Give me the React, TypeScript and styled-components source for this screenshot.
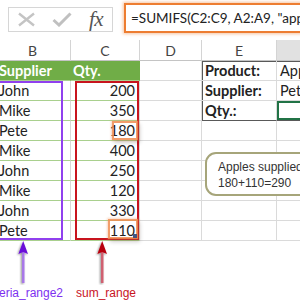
import React from "react";
import styled, { createGlobalStyle } from "styled-components";

const GlobalStyle = createGlobalStyle`
  html, body { margin: 0; padding: 0; background: #fff; }
  body { width: 300px; height: 300px; overflow: hidden; font-family: Lato, "Open Sans", sans-serif; }
  * { box-sizing: border-box; }
`;

const Page = styled.div`
  position: relative;
  width: 300px;
  height: 300px;
  overflow: hidden;
  display: flex;
  flex-direction: column;
  background: #fff;
`;

const Toolbar = styled.div`
  height: 40px;
  flex-shrink: 0;
  display: flex;
  align-items: flex-start;
`;

const ButtonBox = styled.div`
  margin: 7px 0 0 8px;
  width: 105px;
  height: 25px;
  flex-shrink: 0;
  border: 1px solid #d6d6d6;
  display: flex;
  align-items: center;
  padding-left: 8px;
  gap: 16px;
`;

const FxLabel = styled.span`
  font-family: "Liberation Serif", serif;
  font-style: italic;
  font-size: 21px;
  color: #555;
  line-height: 1;
  margin-left: 1px;
  letter-spacing: -0.5px;
`;

const FormulaBar = styled.div`
  margin: 3px 0 0 11px;
  height: 30px;
  min-width: 200px;
  flex-shrink: 0;
  border: 2px solid #ed7d31;
  box-shadow: 0 0 3px 1px rgba(237, 125, 49, 0.45);
  padding-left: 5px;
  font-size: 13.5px;
  line-height: 26px;
  color: #222;
  white-space: nowrap;
  overflow: hidden;
`;

const Sheet = styled.div`
  display: grid;
  grid-template-columns: 76px 69px 62px 75px 60px;
  grid-template-rows: 21px repeat(9, 20px);
  margin-left: -5px;
  flex-shrink: 0;
  font-size: 14.5px;
  color: #222;
`;

const ColHead = styled.div<{ $active?: boolean }>`
  display: flex;
  align-items: center;
  justify-content: center;
  color: #444;
  font-size: 14px;
  background: ${(p) => (p.$active ? "#e1e1e1" : "#fff")};
  border-right: 1px solid #d4d4d4;
  border-bottom: 1px solid #c4c4c4;
`;

const TableCell = styled.div<{ $head?: boolean; $num?: boolean; $lead?: boolean }>`
  display: flex;
  align-items: center;
  justify-content: ${(p) => (p.$num ? "flex-end" : "flex-start")};
  padding: ${(p) => (p.$num ? "0 4px 0 0" : p.$lead ? "0 0 0 4px" : "0 0 0 2px")};
  background: ${(p) => (p.$head ? "#70ad47" : "#fff")};
  color: ${(p) => (p.$head ? "#fff" : "#222")};
  font-weight: ${(p) => (p.$head ? 700 : 400)};
  border-bottom: 1px solid #a9d08e;
  border-right: 1px solid ${(p) => (p.$head ? "#70ad47" : "#d9d9d9")};
  white-space: nowrap;
`;

const SheetCell = styled.div<{
  $bold?: boolean;
  $lead?: boolean;
  $top?: boolean;
  $bottom?: boolean;
  $selected?: boolean;
}>`
  display: flex;
  align-items: center;
  padding-left: 3px;
  font-weight: ${(p) => (p.$bold ? 700 : 400)};
  white-space: nowrap;
  overflow: hidden;
  border-right: 1px solid #dadada;
  border-bottom: 1px solid ${(p) => (p.$bottom ? "#595959" : "#dadada")};
  box-shadow: ${(p) => {
    const s: string[] = [];
    if (p.$selected) s.push("inset 0 0 0 2px #217346");
    if (p.$lead) s.push("inset 1px 0 0 #595959");
    if (p.$top) s.push("inset 0 1px 0 #595959");
    return s.length ? s.join(", ") : "none";
  }};
`;

const RangeBox = styled.div<{ $color: string }>`
  position: absolute;
  border: 2px solid ${(p) => p.$color};
  pointer-events: none;
`;

const MatchBox = styled.div`
  position: absolute;
  border: 2px solid rgba(240, 140, 80, 0.85);
  box-shadow: 0 0 2px 1px rgba(240, 150, 90, 0.35), 2px 3px 4px rgba(0, 0, 0, 0.18);
`;

const FillHandle = styled.div`
  position: absolute;
  right: -1px;
  bottom: -1px;
  width: 4px;
  height: 4px;
  background: #44557f;
`;

const Callout = styled.div`
  position: absolute;
  left: 205px;
  top: 152px;
  width: 115px;
  height: 44px;
  background: #fff;
  border: 2px solid #a6a57a;
  border-radius: 11px;
  padding: 5px 0 0 11px;
  font-family: "Liberation Sans", Arial, sans-serif;
  font-size: 12px;
  line-height: 16px;
  color: #333;
  white-space: nowrap;
`;

const Annotations = styled.div`
  display: flex;
  margin-left: -22px;
  flex-shrink: 0;
`;

const Pointer = styled.div<{ $width: number; $color: string }>`
  width: ${(p) => p.$width}px;
  display: flex;
  flex-direction: column;
  align-items: center;
  color: ${(p) => p.$color};
  font-family: "Liberation Sans", Arial, sans-serif;
  font-size: 12px;
  white-space: nowrap;
  & + & {
    margin-left: -4px;
  }
`;

const PointerLabel = styled.span<{ $shift?: number }>`
  margin-top: 1px;
  padding-left: ${(p) => p.$shift ?? 0}px;
`;

const Arrow = ({ head, shaft, id }: { head: string; shaft: string; id: string }) => (
  <svg width="16" height="44" viewBox="0 0 16 44">
    <defs>
      <filter id={id} x="-50%" y="-20%" width="200%" height="140%">
        <feDropShadow dx="-1" dy="1" stdDeviation="1" floodColor="#000" floodOpacity="0.45" />
      </filter>
    </defs>
    <g filter={`url(#${id})`}>
      <rect x="7" y="11" width="2.5" height="31" fill={shaft} />
      <path d="M8.2 0 L13 13 L8.2 11 L3.4 13 Z" fill={head} />
    </g>
  </svg>
);

const names = ["John", "Mike", "Pete", "Mike", "John", "Mike", "John", "Pete"];
const qty = [200, 350, 180, 400, 250, 120, 330, 110];

const lookup: { label: string; value: string }[] = [
  { label: "Product:", value: "Apples" },
  { label: "Supplier:", value: "Pete" },
  { label: "Qty.:", value: "" },
];

export default function App() {
  return (
    <Page>
      <GlobalStyle />
      <Toolbar>
        <ButtonBox>
          <svg width="19" height="15" viewBox="0 0 19 15">
            <path d="M2 1.5 L17 13.5 M17 1.5 L2 13.5" stroke="#c4c4c4" strokeWidth="2.4" fill="none" />
          </svg>
          <svg width="20" height="15" viewBox="0 0 20 15">
            <path d="M1.5 8 L7 13 L18.5 1.5" stroke="#c0c0c0" strokeWidth="3" fill="none" />
          </svg>
          <FxLabel>fx</FxLabel>
        </ButtonBox>
        <FormulaBar>=SUMIFS(C2:C9, A2:A9, "apples", B2:B9, "pete")</FormulaBar>
      </Toolbar>

      <Sheet>
        <ColHead>B</ColHead>
        <ColHead>C</ColHead>
        <ColHead>D</ColHead>
        <ColHead>E</ColHead>
        <ColHead $active />

        <TableCell $head $lead>Supplier</TableCell>
        <TableCell $head>Qty.</TableCell>
        <SheetCell />
        <SheetCell $bold $lead $top>{lookup[0].label}</SheetCell>
        <SheetCell $top>{lookup[0].value}</SheetCell>

        {names.map((n, i) => (
          <React.Fragment key={i}>
            <TableCell $lead>{n}</TableCell>
            <TableCell $num>{qty[i]}</TableCell>
            <SheetCell />
            {i < 2 ? (
              <>
                <SheetCell $bold $lead $bottom={i === 1}>{lookup[i + 1].label}</SheetCell>
                <SheetCell $bottom={i === 1} $selected={i === 1}>{lookup[i + 1].value}</SheetCell>
              </>
            ) : (
              <>
                <SheetCell />
                <SheetCell />
              </>
            )}
          </React.Fragment>
        ))}
      </Sheet>

      <Annotations>
        <Pointer $width={90} $color="#7d2ff0">
          <Arrow id="pa" head="#6a10d8" shaft="#a878e8" />
          <PointerLabel>criteria_range2</PointerLabel>
        </Pointer>
        <Pointer $width={76} $color="#c8141e">
          <Arrow id="ra" head="#b80010" shaft="#d06070" />
          <PointerLabel $shift={8}>sum_range</PointerLabel>
        </Pointer>
      </Annotations>

      <RangeBox $color="#9040ee" style={{ left: -2, top: 81, width: 65, height: 159 }} />
      <RangeBox $color="#c8141e" style={{ left: 75, top: 81, width: 64, height: 159 }} />
      <MatchBox style={{ left: 112, top: 121, width: 26, height: 19 }} />
      <MatchBox style={{ left: 108, top: 219, width: 30, height: 20 }}>
        <FillHandle />
      </MatchBox>
      <Callout>
        Apples supplied by Pete:
        <br />
        180+110=290
      </Callout>
    </Page>
  );
}
